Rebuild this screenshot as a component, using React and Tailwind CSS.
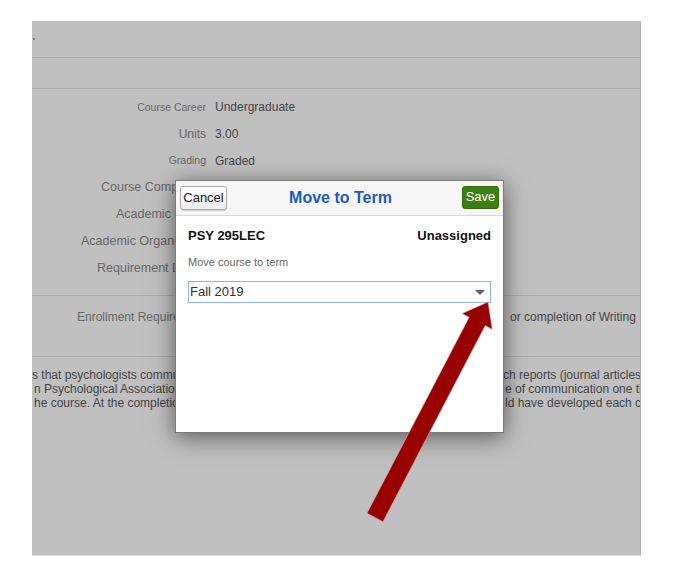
const FIELDS = [
    { label: 'Course Career', value: 'Undergraduate', size: 'text-[10.5px]' },
    { label: 'Units', value: '3.00', size: 'text-[12px]' },
    { label: 'Grading', value: 'Graded', size: 'text-[10.5px]' },
];

// rows hidden behind the modal: label starts at a fixed spot
const HIDDEN_FIELDS = [
    { label: 'Course Components', start: 'pl-[69px]' },
    { label: 'Academic Group', start: 'pl-[84px]' },
    { label: 'Academic Organization', start: 'pl-[49px]' },
    { label: 'Requirement Designation', start: 'pl-[65px]' },
];

const PARAGRAPH = [
    ['s that psychologists communicate their findings, including the structure of resear', 'ch reports (journal articles),', 'pl-0'],
    ['n Psychological Association style. Students will practice each typ', 'e of communication one th', 'pl-[2px]'],
    ['he course. At the completion of the course students shou', 'ld have developed each c', 'pl-[2px]'],
];

function Arrow() {
    return (
        <svg className="absolute inset-0 pointer-events-none" width="675" height="568" viewBox="0 0 675 568">
            <polygon
                points="488,302 492.2,329.3 485.2,325.6 383,521.7 367,513.3 469.2,317.2 462.2,313.5"
                fill="#990000"
                stroke="#c9a7a7"
                strokeWidth="0.6"
            />
        </svg>
    );
}

export default function App() {
    return (
        <div
            className="relative w-[675px] h-[568px] bg-white overflow-hidden pt-[21px] pl-[32px]"
            style={{ fontFamily: '"Liberation Sans", Arial, sans-serif' }}
        >
            {/* ── Greyed-out page behind the modal ── */}
            <div className="relative w-[609px] h-[535px] bg-[#c0c0c0] border-r border-[#b0b0b0] border-b border-b-[#dadada] overflow-hidden text-[#555]">
                <div className="h-[37px] border-b border-[#a9a9a9] flex items-center">
                    <span className="w-[2px] h-[2px] bg-[#8a7a6a] ml-[1px]" />
                </div>
                <div className="h-[31px] border-b border-[#a9a9a9]" />

                <div className="pt-[5px] flex flex-col">
                    {FIELDS.map((f) => (
                        <div key={f.label} className="h-[26.8px] flex items-center">
                            <span className={`w-[175px] shrink-0 pr-[1px] text-right whitespace-nowrap text-[#666] ${f.size}`}>
                                {f.label}
                            </span>
                            <span className="ml-[8px] text-[12px] text-[#444] whitespace-nowrap">{f.value}</span>
                        </div>
                    ))}
                    {HIDDEN_FIELDS.map((f) => (
                        <div key={f.label} className={`h-[26.8px] flex items-center text-[12.5px] text-[#666] whitespace-nowrap ${f.start}`}>
                            {f.label}
                        </div>
                    ))}
                </div>

                <div className="mt-[13px] border-t border-b border-[#a9a9a9] h-[62px] flex items-start pt-[12px]">
                    <span className="ml-[45px] w-[433px] shrink-0 text-[12px] text-[#666] whitespace-nowrap overflow-hidden">
                        Enrollment Requirements
                    </span>
                    <span className="text-[12px] text-[#444] whitespace-nowrap">
                        or completion of Writing Skills I
                    </span>
                </div>

                <div className="pt-[11px] flex flex-col text-[12px] leading-[14px] text-[#444]">
                    {PARAGRAPH.map(([left, right, pad]) => (
                        <div key={left} className="flex">
                            <span className={`w-[471px] shrink-0 overflow-hidden whitespace-nowrap ${pad}`}>{left}</span>
                            <span className={`whitespace-nowrap ${pad}`}>{right}</span>
                        </div>
                    ))}
                </div>
            </div>

            {/* ── Move to Term modal ── */}
            <div className="absolute left-[175px] top-[180px] w-[329px] h-[253px] bg-white border border-[#7a7a7a] shadow-[0_4px_22px_rgba(0,0,0,0.55)] flex flex-col">
                <div className="h-[35px] bg-[#f6f6f6] border-b border-[#d8d8d8] flex items-center justify-between px-[4px]">
                    <button className="h-[24px] w-[47px] rounded-[3px] border border-[#a8a8a8] bg-gradient-to-b from-white to-[#ececec] shadow-[0_1px_1px_rgba(0,0,0,0.15)] text-[13px] text-[#222]">
                        Cancel
                    </button>
                    <span className="text-[16px] font-bold text-[#1b5bc0] -ml-[8px]">Move to Term</span>
                    <button className="h-[23px] w-[37px] rounded-[3px] bg-[#3f7d13] border border-[#356b0e] text-[13px] text-white -mt-[2px]">
                        Save
                    </button>
                </div>

                <div className="px-[12px] pt-[10px]">
                    <div className="flex justify-between text-[13px] font-bold text-[#111]">
                        <span>PSY 295LEC</span>
                        <span>Unassigned</span>
                    </div>
                    <p className="mt-[8px] text-[11px] text-[#666]">Move course to term</p>
                    <div className="mt-[11px] h-[22px] border border-[#8eb2ea] flex items-center justify-between pl-[1px] pr-[5px]">
                        <span className="text-[13px] text-[#333]">Fall 2019</span>
                        <span className="w-0 h-0 border-l-[5px] border-r-[5px] border-t-[5px] border-l-transparent border-r-transparent border-t-[#666]" />
                    </div>
                </div>
            </div>

            <Arrow />
        </div>
    );
}
